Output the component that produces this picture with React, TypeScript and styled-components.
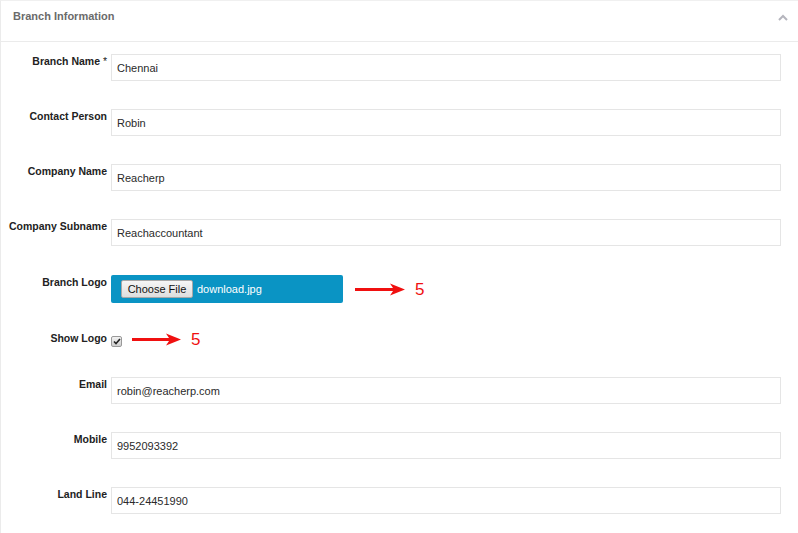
import styled, { createGlobalStyle } from 'styled-components';

const GlobalStyle = createGlobalStyle`
  html, body {
    margin: 0;
    padding: 0;
    background: #fff;
    font-family: "Liberation Sans", Arial, sans-serif;
  }
`;

const Panel = styled.section`
  width: 798px;
  height: 533px;
  box-sizing: border-box;
  border-top: 1px solid #f0f0f0;
  border-left: 1px solid #ebebeb;
  overflow: hidden;
`;

const PanelHeader = styled.header`
  height: 41px;
  box-sizing: border-box;
  border-bottom: 1px solid #ebebeb;
  display: flex;
  align-items: flex-start;
  justify-content: space-between;
  padding: 9px 10px 0 12px;
`;

const Title = styled.h3`
  margin: 0;
  font-size: 11px;
  line-height: 13px;
  font-weight: bold;
  color: #6b6b6b;
`;

const Collapse = styled.span`
  display: flex;
  margin-top: 4px;
`;

const Body = styled.div`
  display: flex;
  flex-direction: column;
  gap: 28px;
  padding: 12px 17px 0 0;
`;

const Row = styled.div<{ $tall?: number; $extra?: number }>`
  display: grid;
  grid-template-columns: 106px 1fr;
  column-gap: 4px;
  align-items: start;
  min-height: ${(p) => p.$tall ?? 18}px;
  margin-top: ${(p) => p.$extra ?? 0}px;
`;

const Label = styled.label<{ $pad?: number }>`
  text-align: right;
  font-size: 10.5px;
  line-height: 13px;
  font-weight: bold;
  color: #222;
  padding-top: ${(p) => p.$pad ?? 1}px;
  white-space: nowrap;
`;

const Req = styled.span`
  font-weight: normal;
`;

const TextInput = styled.input`
  height: 27px;
  box-sizing: border-box;
  width: 100%;
  border: 1px solid #e5e5e5;
  background: #fff;
  padding: 0 5px;
  font-family: "Liberation Sans", Arial, sans-serif;
  font-size: 11px;
  color: #2a2a2a;
  outline: none;
`;

const Inline = styled.div`
  display: flex;
  align-items: center;
`;

const FileBox = styled.div`
  width: 232px;
  height: 28px;
  box-sizing: border-box;
  background: #0a94c4;
  border-radius: 2px;
  display: flex;
  align-items: center;
  padding-left: 10px;
  gap: 4px;
`;

const FileButton = styled.button`
  height: 18px;
  width: 72px;
  padding: 0;
  border: 1px solid #a8a8a8;
  border-radius: 2px;
  background: linear-gradient(#f6f6f6, #dedede);
  font-family: "Liberation Sans", Arial, sans-serif;
  font-size: 11px;
  color: #111;
`;

const FileName = styled.span`
  font-size: 11px;
  color: #fff;
`;

const Note = styled.div<{ $left: number }>`
  display: flex;
  align-items: center;
  margin-left: ${(p) => p.$left}px;
  gap: 10px;
`;

const NoteNum = styled.span`
  font-size: 17px;
  color: #f01010;
  line-height: 1;
`;

const CheckBox = styled.span`
  margin-top: 3px;
  width: 9px;
  height: 9px;
  border: 1px solid #999;
  border-radius: 2px;
  background: linear-gradient(#f2f2f2, #cfcfcf);
  display: flex;
  align-items: center;
  justify-content: center;
`;

function Arrow({ width }: { width: number }) {
  return (
    <svg width={width} height={13} viewBox={`0 0 ${width} 13`}>
      <rect x={0} y={5} width={width - 8} height={3} fill="#f01010" />
      <path d={`M${width} 6.5 L${width - 15} 0.5 L${width - 11} 6.5 L${width - 15} 12.5 Z`} fill="#f01010" />
    </svg>
  );
}

const fields = [
  { label: 'Contact Person', value: 'Robin' },
  { label: 'Company Name', value: 'Reacherp' },
  { label: 'Company Subname', value: 'Reachaccountant' },
];

const contacts = [
  { label: 'Email', value: 'robin@reacherp.com' },
  { label: 'Mobile', value: '9952093392' },
  { label: 'Land Line', value: '044-24451990' },
];

export default function App() {
  return (
    <>
      <GlobalStyle />
      <Panel>
        <PanelHeader>
          <Title>Branch Information</Title>
          <Collapse>
            <svg width="10" height="7" viewBox="0 0 10 7">
              <path d="M1 6 L5 2 L9 6" fill="none" stroke="#b5b5bd" strokeWidth="2" />
            </svg>
          </Collapse>
        </PanelHeader>
        <Body>
          <Row $tall={27}>
            <Label>
              Branch Name <Req>*</Req>
            </Label>
            <TextInput defaultValue="Chennai" />
          </Row>
          {fields.map((f) => (
            <Row key={f.label} $tall={27}>
              <Label>{f.label}</Label>
              <TextInput defaultValue={f.value} />
            </Row>
          ))}
          <Row $tall={28} $extra={1}>
            <Label $pad={1}>Branch Logo</Label>
            <Inline>
              <FileBox>
                <FileButton type="button">Choose File</FileButton>
                <FileName>download.jpg</FileName>
              </FileBox>
              <Note $left={12}>
                <Arrow width={50} />
                <NoteNum>5</NoteNum>
              </Note>
            </Inline>
          </Row>
          <Row $tall={18}>
            <Label $pad={1}>Show Logo</Label>
            <Inline>
              <CheckBox>
                <svg width="8" height="7" viewBox="0 0 8 7">
                  <path d="M1 3.5 L3 5.5 L7 1" fill="none" stroke="#222" strokeWidth="1.6" />
                </svg>
              </CheckBox>
              <Note $left={10}>
                <Arrow width={49} />
                <NoteNum>5</NoteNum>
              </Note>
            </Inline>
          </Row>
          {contacts.map((f) => (
            <Row key={f.label} $tall={27}>
              <Label>{f.label}</Label>
              <TextInput defaultValue={f.value} />
            </Row>
          ))}
        </Body>
      </Panel>
    </>
  );
}
